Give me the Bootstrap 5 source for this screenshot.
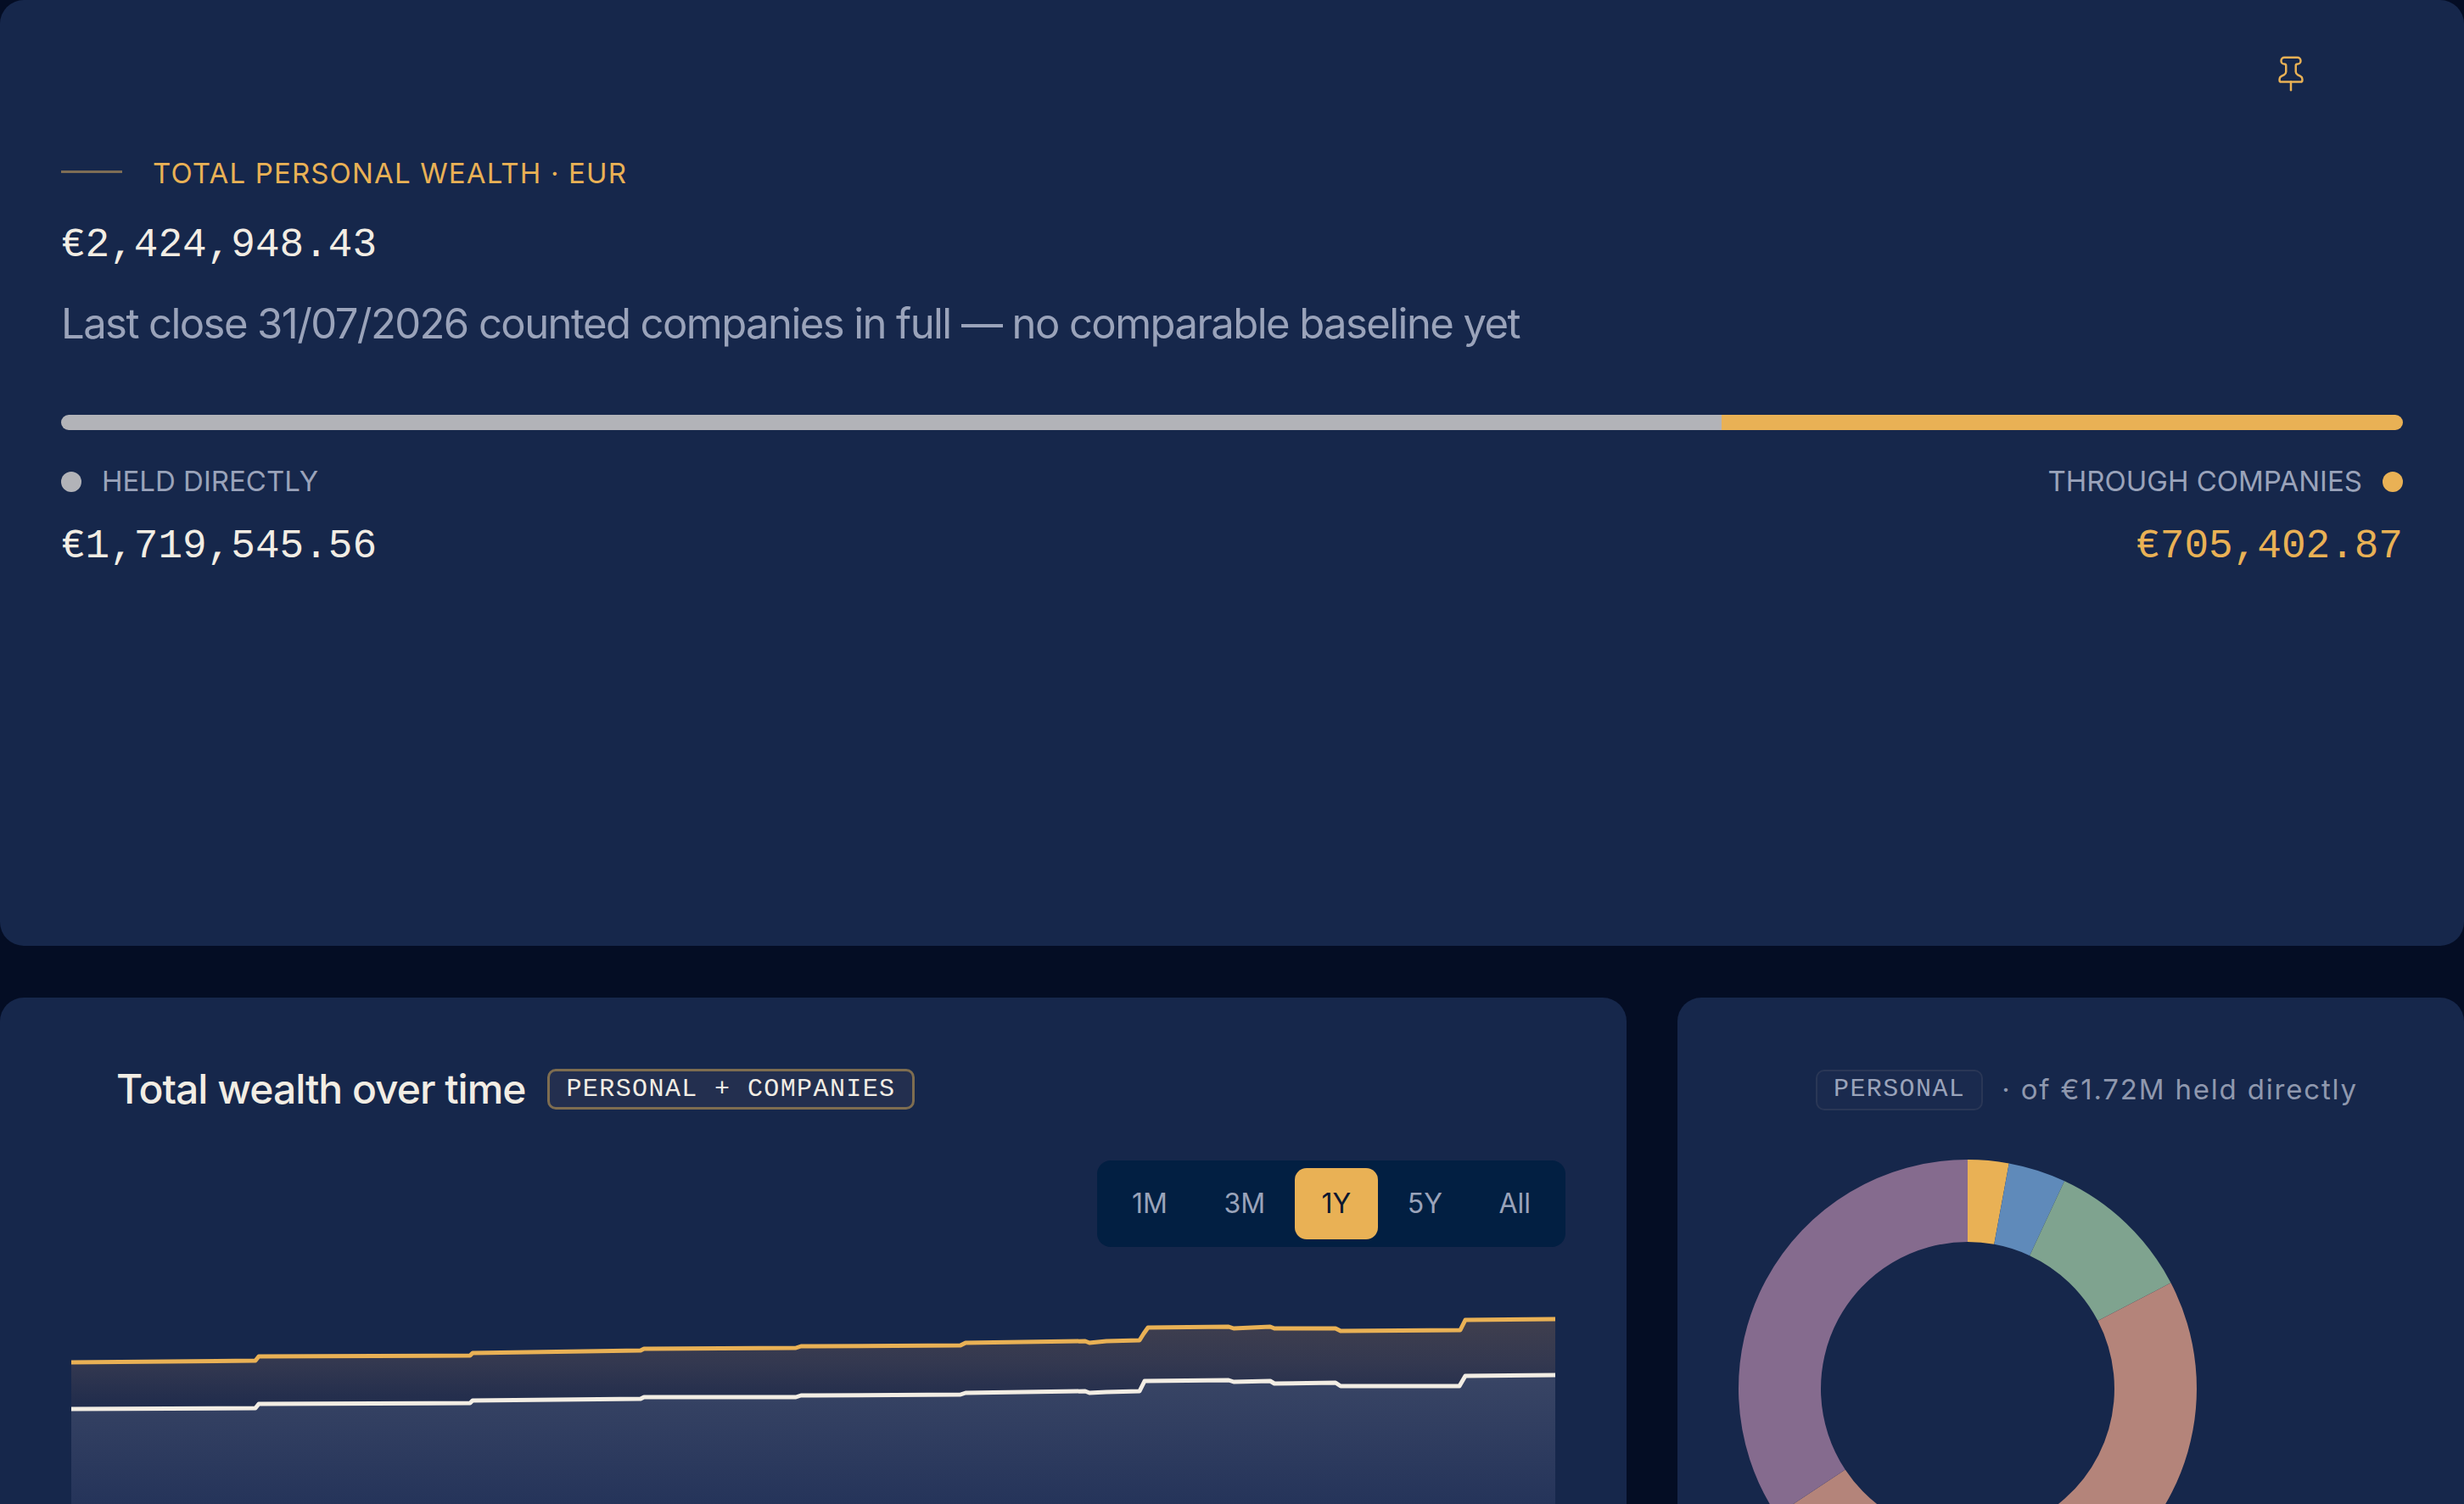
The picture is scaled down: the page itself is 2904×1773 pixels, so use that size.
<!DOCTYPE html>
<html lang="en">
<head>
  <meta charset="UTF-8">
  <title>Total personal wealth</title>
  <link href="https://cdn.jsdelivr.net/npm/bootstrap@5.3.3/dist/css/bootstrap.min.css" rel="stylesheet">
  <style>
    html, body { height: 1773px; overflow: hidden; }
    body { background: #040d24; font-family: Inter, "Liberation Sans", sans-serif; color: #f2ede4; }
    .panel { background: #16274b; border: 0; border-radius: 28px; color: #f2ede4; }
    .hero { height: 1115px; padding: 64px 72px 0; margin-bottom: 61px; }
    .pin-row { height: 46px; padding-right: 109px; }
    .pin-icon { width: 46px; height: 46px; stroke: #e9b155; stroke-width: 1.3; fill: none; stroke-linecap: round; stroke-linejoin: round; }
    .eyebrow { margin-top: 75px; height: 40px; color: #e9b155; font-size: 33px; letter-spacing: 1.15px; }
    .eyebrow-dash { width: 72px; height: 3px; background: #7e6d55; margin-right: 36px; margin-top: -6px; }
    .money { font-family: "Liberation Mono", monospace; font-size: 47.7px; line-height: 58px; color: #f2ede4; }
    .money-gold { color: #e9b155; }
    .hero-total { margin-top: 35px; }
    .hero-note { margin-top: 34px; font-size: 49px; line-height: 60px; letter-spacing: -0.032em; color: #9aa3ba; }
    .split-bar { margin-top: 77px; height: 18px; border-radius: 9px; background: transparent; }
    .bar-direct { background: #b2b3b8; }
    .bar-company { background: #e9b155; }
    .legend-row { margin-top: 41px; height: 40px; font-size: 33px; color: #9aa3ba; letter-spacing: 0; }
    .legend-dot { width: 24px; height: 24px; border-radius: 50%; }
    .legend-amounts { margin-top: 27px; }
    .chart-panel { width: 1917px; height: 700px; padding: 84px 0 0 84px; flex: none; }
    .share-panel { flex: 1; height: 700px; margin-left: 60px; padding-top: 84px; }
    .panel-title { font-size: 48px; line-height: 48px; font-weight: 500; letter-spacing: -0.021em; margin: 0 0 0 53px; }
    .tag-pill { font-family: "Liberation Mono", monospace; font-size: 30px; font-weight: 400; letter-spacing: 1.4px; border-radius: 10px; line-height: 42px; height: 48px; padding: 0 19px; }
    .tag-strong { background: #232f4f; border: 3px solid #7e6d50; color: #f2ede4; margin-left: 26px; }
    .tag-muted { background: #1a2a4e; border: 2px solid #2a3756; color: #9aa3ba; }
    .range-switch { background: #021f42; border-radius: 16px; padding: 9px; width: 552px; margin: 60px 72px 0 auto; height: 102px; flex: none; }
    .range-btn { color: #9aa3ba; font-size: 32px; line-height: 40px; border: 0; border-radius: 14px; padding: 0 32px; height: 84px; }
    .range-btn.is-on { background: #e9b155; color: #0b1730; }
    .trend-svg { display: block; width: 1749px; height: 300px; margin-top: 70px; flex: none; }
    .share-head { padding-left: 163px; }
    .share-note { font-size: 33px; letter-spacing: 0.055em; color: #8f98ae; margin-left: 22px; }
    .donut-svg { display: block; width: 560px; height: 560px; margin: 47px 0 0 62px; flex: none; }
  </style>
</head>
<body>
  <div class="card panel hero">
    <div class="pin-row d-flex justify-content-end">
      <svg class="pin-icon" viewBox="0 0 24 24"><path d="M12 17v5"/><path d="M9 10.76a2 2 0 0 1-1.11 1.79l-1.78.9A2 2 0 0 0 5 15.24V16a1 1 0 0 0 1 1h12a1 1 0 0 0 1-1v-.76a2 2 0 0 0-1.11-1.79l-1.78-.9A2 2 0 0 1 15 10.76V7a1 1 0 0 1 1-1 2 2 0 0 0 0-4H8a2 2 0 0 0 0 4 1 1 0 0 1 1 1z"/></svg>
    </div>
    <div class="eyebrow d-flex align-items-center">
      <span class="eyebrow-dash"></span>
      <span>TOTAL PERSONAL WEALTH · EUR</span>
    </div>
    <div class="money hero-total">€2,424,948.43</div>
    <div class="hero-note">Last close 31/07/2026 counted companies in full — no comparable baseline yet</div>
    <div class="progress split-bar">
      <div class="progress-bar bar-direct" style="width: 70.91%"></div>
      <div class="progress-bar bar-company" style="width: 29.09%"></div>
    </div>
    <div class="legend-row d-flex justify-content-between align-items-center">
      <div class="d-flex align-items-center">
        <span class="legend-dot bar-direct me-4"></span>
        <span>HELD DIRECTLY</span>
      </div>
      <div class="d-flex align-items-center">
        <span>THROUGH COMPANIES</span>
        <span class="legend-dot bar-company ms-4"></span>
      </div>
    </div>
    <div class="legend-amounts d-flex justify-content-between">
      <div class="money">€1,719,545.56</div>
      <div class="money money-gold">€705,402.87</div>
    </div>
  </div>

  <div class="d-flex">
    <div class="card panel chart-panel">
      <div class="d-flex align-items-center">
        <h2 class="panel-title">Total wealth over time</h2>
        <span class="badge tag-pill tag-strong">PERSONAL + COMPANIES</span>
      </div>
      <div class="range-switch d-flex justify-content-between">
        <button type="button" class="btn range-btn">1M</button>
        <button type="button" class="btn range-btn">3M</button>
        <button type="button" class="btn range-btn is-on">1Y</button>
        <button type="button" class="btn range-btn">5Y</button>
        <button type="button" class="btn range-btn">All</button>
      </div>
      <svg class="trend-svg" viewBox="84 1540 1749 300" preserveAspectRatio="none">
        <defs>
          <linearGradient id="fillCompanies" gradientUnits="userSpaceOnUse" x1="0" y1="1555" x2="0" y2="1660">
            <stop offset="0" stop-color="#403f4e"/>
            <stop offset="0.5" stop-color="#333850"/>
            <stop offset="1" stop-color="#1f2b4c"/>
          </linearGradient>
          <linearGradient id="fillDirect" gradientUnits="userSpaceOnUse" x1="0" y1="1620" x2="0" y2="1773">
            <stop offset="0" stop-color="#394565"/>
            <stop offset="1" stop-color="#25345a"/>
          </linearGradient>
        </defs>
        <path id="bandCompanies" fill="url(#fillCompanies)" d=""/>
        <path id="bandDirect" fill="url(#fillDirect)" d=""/>
        <path id="lineCompanies" fill="none" stroke="#e9b155" stroke-width="5" stroke-linejoin="round" d=""/>
        <path id="lineDirect" fill="none" stroke="#f2ede4" stroke-width="5" stroke-linejoin="round" d=""/>
      </svg>
    </div>
    <div class="card panel share-panel">
      <div class="share-head d-flex align-items-center">
        <span class="badge tag-pill tag-muted">PERSONAL</span>
        <span class="share-note">· of €1.72M held directly</span>
      </div>
      <svg class="donut-svg" viewBox="0 0 560 560" id="donut"></svg>
    </div>
  </div>

  <script>
    const companies = [[84,1606],[301,1604],[305,1599],[554,1598],[557,1595],[755,1592],[759,1590],[938,1589],[944,1587],[960,1587],[1132,1586],[1138,1583],[1279,1581],[1284,1583],[1304,1581],[1343,1580],[1348,1572],[1353,1565],[1448,1564],[1454,1566],[1497,1564],[1502,1566],[1574,1566],[1580,1569],[1721,1568],[1727,1556],[1833,1555]];
    const direct = [[84,1661],[301,1660],[305,1655],[554,1654],[557,1651],[755,1649],[759,1647],[938,1647],[944,1645],[960,1645],[1132,1644],[1138,1642],[1279,1640],[1284,1642],[1304,1641],[1343,1640],[1349,1628],[1448,1627],[1454,1629],[1497,1628],[1502,1631],[1574,1630],[1580,1634],[1720,1634],[1727,1622],[1833,1621]];
    const toPath = pts => pts.map((p, i) => (i ? "L" : "M") + p[0] + " " + p[1]).join(" ");

    document.getElementById("lineCompanies").setAttribute("d", toPath(companies));
    document.getElementById("lineDirect").setAttribute("d", toPath(direct));
    document.getElementById("bandCompanies").setAttribute("d", toPath(companies) + " " + toPath(direct.slice().reverse()).replace("M", "L") + " Z");
    document.getElementById("bandDirect").setAttribute("d", toPath(direct) + " L1833 1840 L84 1840 Z");

    // donut slices, degrees clockwise from the top
    const slices = [[0, 10.4, "#e9b155"], [10.4, 25, "#5f8aba"], [25, 62.5, "#7fa38f"], [62.5, 236.5, "#b4847a"], [236.5, 360, "#856b8e"]];
    const cx = 280, cy = 280, ro = 270, ri = 173;
    const pt = (r, a) => {
      const t = a * Math.PI / 180;
      return (cx + r * Math.sin(t)).toFixed(2) + " " + (cy - r * Math.cos(t)).toFixed(2);
    };
    document.getElementById("donut").innerHTML = slices.map(([a, b, color]) => {
      const big = b - a > 180 ? 1 : 0;
      return `<path fill="${color}" d="M${pt(ro, a)} A${ro} ${ro} 0 ${big} 1 ${pt(ro, b)} L${pt(ri, b)} A${ri} ${ri} 0 ${big} 0 ${pt(ri, a)} Z"/>`;
    }).join("");
  </script>
  <script src="https://cdn.jsdelivr.net/npm/bootstrap@5.3.3/dist/js/bootstrap.bundle.min.js"></script>
</body>
</html>
